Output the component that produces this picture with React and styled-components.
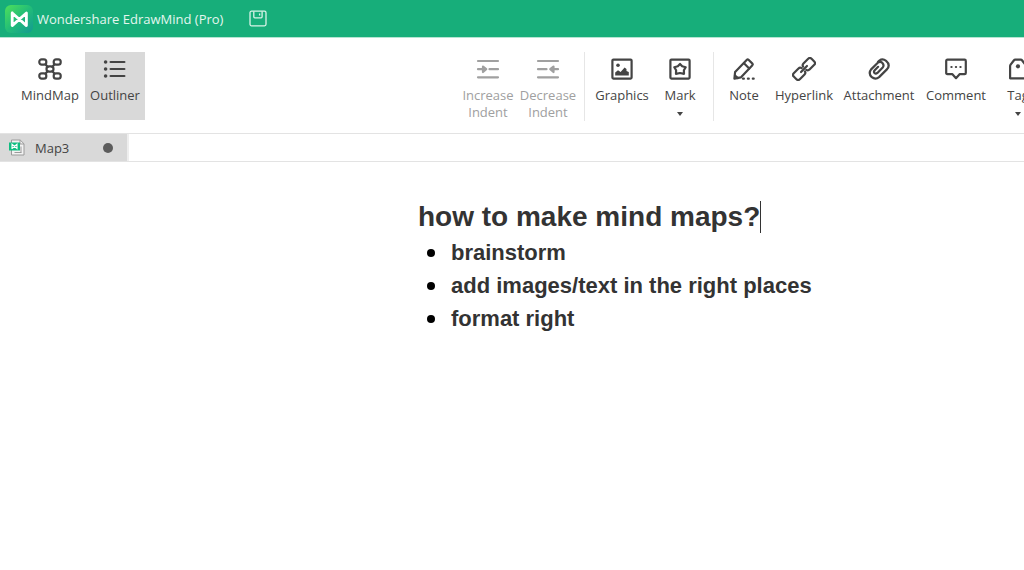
import { useState } from 'react'
import styled, { createGlobalStyle } from 'styled-components'

const tools = {
  view: [
    { id: 'mindmap', label: 'MindMap', icon: MindMapIcon, width: 60 },
    { id: 'outliner', label: 'Outliner', icon: OutlinerIcon, width: 60 },
  ],
  indent: [
    { id: 'increase', label: 'Increase Indent', icon: IncreaseIcon, width: 60, disabled: true },
    { id: 'decrease', label: 'Decrease Indent', icon: DecreaseIcon, width: 60, disabled: true },
  ],
  media: [
    { id: 'graphics', label: 'Graphics', icon: GraphicsIcon, width: 62 },
    { id: 'mark', label: 'Mark', icon: MarkIcon, width: 54, menu: true },
  ],
  insert: [
    { id: 'note', label: 'Note', icon: NoteIcon, width: 48 },
    { id: 'hyperlink', label: 'Hyperlink', icon: HyperlinkIcon, width: 72 },
    { id: 'attachment', label: 'Attachment', icon: AttachmentIcon, width: 78 },
    { id: 'comment', label: 'Comment', icon: CommentIcon, width: 76 },
    { id: 'tag', label: 'Tag', icon: TagIcon, width: 48, menu: true },
  ],
}

const topics = ['brainstorm', 'add images/text in the right places', 'format right']

function ToolButton({ tool, active, onClick }) {
  const Icon = tool.icon
  return (
    <Tool type='button' $width={tool.width} $active={active} disabled={tool.disabled} onClick={onClick}>
      <Icon />
      <Label>{tool.label}</Label>
      {tool.menu && <Arrow />}
    </Tool>
  )
}

function App() {
  const [view, setView] = useState('outliner')

  return (
    <>
      <GlobalStyle />
      <TitleBar>
        <Logo />
        <AppName>Wondershare EdrawMind (Pro)</AppName>
        <SaveButton type='button' aria-label='Save'>
          <SaveIcon />
        </SaveButton>
      </TitleBar>
      <Toolbar>
        <ViewGroup>
          {tools.view.map((tool) => (
            <ToolButton key={tool.id} tool={tool} active={view === tool.id} onClick={() => setView(tool.id)} />
          ))}
        </ViewGroup>
        <Group $divided>
          {tools.indent.map((tool) => (
            <ToolButton key={tool.id} tool={tool} />
          ))}
        </Group>
        <Group $divided>
          {tools.media.map((tool) => (
            <ToolButton key={tool.id} tool={tool} />
          ))}
        </Group>
        <Group>
          {tools.insert.map((tool) => (
            <ToolButton key={tool.id} tool={tool} />
          ))}
        </Group>
      </Toolbar>
      <Tabs>
        <Tab type='button'>
          <FileIcon />
          <TabName>Map3</TabName>
          <Unsaved />
        </Tab>
      </Tabs>
      <Outline>
        <Title>
          how to make mind maps?
          <Caret />
        </Title>
        <Topics>
          {topics.map((topic) => (
            <Topic key={topic}>{topic}</Topic>
          ))}
        </Topics>
      </Outline>
    </>
  )
}

export default App

/* icons */

function Logo() {
  return (
    <svg width='28' height='28' viewBox='0 0 28 28'>
      <defs>
        <linearGradient id='logo' x1='0' y1='0' x2='1' y2='1'>
          <stop offset='0' stopColor='#4fe05a' />
          <stop offset='0.5' stopColor='#22bd78' />
          <stop offset='1' stopColor='#129a92' />
        </linearGradient>
      </defs>
      <rect width='28' height='28' rx='6' fill='url(#logo)' />
      <path
        d='M7.2 8v12.6L21.4 8v12.6L7.2 8'
        fill='none'
        stroke='#fff'
        strokeWidth='2.8'
        strokeLinejoin='round'
        strokeLinecap='round'
      />
    </svg>
  )
}

function SaveIcon() {
  return (
    <svg width='18' height='18' viewBox='0 0 18 18' fill='none' stroke='#d9f3e8' strokeWidth='1.3'>
      <rect x='1' y='1.2' width='16' height='14.6' rx='1.5' />
      <path d='M4.8 1.5v5.3q0 1 1 1h6.3q1 0 1-1V1.5M10.6 3.4v2' />
    </svg>
  )
}

function MindMapIcon() {
  return (
    <Icon>
      <path d='M7.6 7.5l2 2.3M16.4 7.5l-2 2.3M7.6 16.5l2-2.3M16.4 16.5l-2-2.3' />
      <rect x='1.3' y='2.4' width='7' height='5.2' rx='2.4' />
      <rect x='15.7' y='2.4' width='7' height='5.2' rx='2.4' />
      <rect x='1.3' y='16.4' width='7' height='5.2' rx='2.4' />
      <rect x='15.7' y='16.4' width='7' height='5.2' rx='2.4' />
      <rect x='8.5' y='9.3' width='7' height='5.4' rx='2.6' />
    </Icon>
  )
}

function OutlinerIcon() {
  return (
    <Icon>
      <path d='M7.6 5h13.8M7.6 12h13.8M7.6 19h13.8' />
      <g fill='currentColor' stroke='none'>
        <circle cx='2.6' cy='5' r='1.8' />
        <circle cx='2.6' cy='12' r='1.8' />
        <circle cx='2.6' cy='19' r='1.8' />
      </g>
    </Icon>
  )
}

function IncreaseIcon() {
  return (
    <Icon>
      <path d='M2 4h20M2 20.3h20M2 12.2h6M13.5 12.2H22' />
      <path d='M7 9.5l3.2 2.7L7 15z' fill='currentColor' />
    </Icon>
  )
}

function DecreaseIcon() {
  return (
    <Icon>
      <path d='M2 4h20M2 20.3h20M2 12.2h8.5M16 12.2H22' />
      <path d='M17.5 9.5l-3.2 2.7 3.2 2.8z' fill='currentColor' />
    </Icon>
  )
}

function GraphicsIcon() {
  return (
    <Icon>
      <rect x='2.4' y='2.6' width='19.2' height='19' rx='1' />
      <circle cx='8' cy='8.2' r='1.8' fill='currentColor' stroke='none' />
      <path d='M5.2 18.6v-3.2l2.8-2.2 2.6 1.8 4-4.6 1.9 1.7v1.8l2.3 1.2v3.5z' fill='currentColor' stroke='none' />
    </Icon>
  )
}

function MarkIcon() {
  return (
    <Icon>
      <rect x='2.4' y='2.6' width='19.2' height='19' rx='1' />
      <path d='M12 6.9l2.2 2.4 3.5 1-1.8 3 .1 3.5-4-.8-4 .8.1-3.5-1.8-3 3.5-1z' />
    </Icon>
  )
}

function NoteIcon() {
  return (
    <Icon>
      <path d='M2.4 21.6l.7-6.6L14.9 2.8q.8-.8 1.6 0l3.9 3.8q.8.8 0 1.6L8.8 20.4z' />
      <path d='M12 6.3l5.2 5.2M3 18.5l3 2.6' />
      <path d='M11 21.7h.9M15.9 21.7h.9M20.8 21.7h.9' />
    </Icon>
  )
}

function HyperlinkIcon() {
  return (
    <Icon>
      <g transform='rotate(-45 12 12)'>
        <path d='M11 9.7q-.5-2-2.5-2H1.8q-2.4 0-2.4 2.4v3.8q0 2.4 2.4 2.4h6.7q2 0 2.5-2' />
        <path d='M13 14.3q.5 2 2.5 2h6.7q2.4 0 2.4-2.4v-3.8q0-2.4-2.4-2.4h-6.7q-2 0-2.5 2' />
        <path d='M7.8 12h8.4' />
      </g>
    </Icon>
  )
}

function AttachmentIcon() {
  return (
    <Icon>
      <path d='M11 4.8l1.4-1.2q3.2-2.4 6.7.3 4.6 4 1 8.2l-8 8q-3.6 3-7.3.1-3.8-3.9-.7-7.8l6.7-6.7q2.4-1.7 4.6.2 2.1 2.3.3 4.6l-5.3 5.4q-1.6 1.3-2.9.1-1.1-1.4.2-2.8l3.4-3.4' />
    </Icon>
  )
}

function CommentIcon() {
  return (
    <Icon>
      <path d='M3.4 2.7h17.2q1.2 0 1.2 1.2v12q0 1.2-1.2 1.2h-4.8L12 21.2l-3.8-4.1H3.4q-1.2 0-1.2-1.2v-12q0-1.2 1.2-1.2z' />
      <path d='M7.4 10h.2M11.9 10h.2M16.4 10h.2' />
    </Icon>
  )
}

function TagIcon() {
  return (
    <Icon>
      <path d='M4.1 21.3V9.2q0-.8.5-1.5l3.2-4.2q.6-.8 1.5-.8h5.4q.9 0 1.5.8l3.2 4.2q.5.7.5 1.5v12.1z' />
      <circle cx='12' cy='9.3' r='2.1' fill='currentColor' stroke='none' />
    </Icon>
  )
}

function FileIcon() {
  return (
    <svg width='18' height='18' viewBox='0 0 18 18' fill='none'>
      <path d='M3.5 1h8.7L16 4.8V16H3.5z' fill='#f2f2f2' stroke='#9b9b9b' />
      <path d='M12 1v4h4M6.5 13.5h7M13 7.5v6' stroke='#9b9b9b' />
      <rect x='1' y='3.5' width='11' height='8' fill='#10bd81' />
      <path d='M4 10V5.3l5 4.2V5M9 10V5.3L4 9.5' stroke='#fff' strokeWidth='1.1' />
    </svg>
  )
}

/* styles */

const GlobalStyle = createGlobalStyle`
  * {
    box-sizing: border-box;
  }
  body {
    margin: 0;
    background: #fff;
    color: #444;
    font-family: 'Open Sans', 'Noto Sans', sans-serif;
    font-size: 13px;
  }
  button {
    border: 0;
    background: none;
    color: inherit;
    font: inherit;
  }
  svg {
    flex-shrink: 0;
  }
`

const TitleBar = styled.header`
  display: flex;
  align-items: center;
  height: 38px;
  padding-left: 5px;
  background: #17ae7a;
  border-bottom: 1px solid #b5e4d2;
`

const AppName = styled.span`
  margin: 0 26px 0 4px;
  color: #e4f6ef;
  white-space: nowrap;
`

const SaveButton = styled.button`
  display: flex;
  padding: 0;
`

const Toolbar = styled.div`
  display: flex;
  height: 96px;
  padding: 14px 0 12px 20px;
  overflow: hidden;
  border-bottom: 1px solid #e3e3e3;
`

const ViewGroup = styled.div`
  display: flex;
  flex-shrink: 0;
  gap: 5px;
  margin-right: 307px;
`

const Group = styled.div`
  display: flex;
  flex-shrink: 0;
  padding: 0 6px;
  border-right: ${(props) => (props.$divided ? '1px solid #e6e6e6' : '0')};
`

const Tool = styled.button`
  display: flex;
  flex-direction: column;
  flex-shrink: 0;
  align-items: center;
  width: ${(props) => props.$width}px;
  height: 68px;
  padding: 5px 0 0;
  background: ${(props) => (props.$active ? '#d9d9d9' : 'transparent')};
  color: ${(props) => (props.disabled ? '#a0a0a0' : '#444')};
`

const Icon = styled.svg.attrs({ viewBox: '0 0 24 24' })`
  width: 24px;
  height: 24px;
  fill: none;
  stroke: currentColor;
  stroke-width: 2.2;
  stroke-linecap: round;
  stroke-linejoin: round;
`

const Label = styled.span`
  margin-top: 6px;
  line-height: 17px;
  text-align: center;
`

const Arrow = styled.span`
  margin-top: 8px;
  border: 3px solid transparent;
  border-top: 4px solid #444;
  border-bottom: 0;
`

const Tabs = styled.div`
  display: flex;
  height: 28px;
  border-bottom: 1px solid #e3e3e3;
`

const Tab = styled.button`
  display: flex;
  align-items: center;
  width: 129px;
  padding: 0 14px 0 8px;
  border-right: 2px solid #eee;
  background: #d9d9d9;
`

const TabName = styled.span`
  flex: 1;
  margin-left: 9px;
  text-align: left;
`

const Unsaved = styled.span`
  width: 10px;
  height: 10px;
  border-radius: 50%;
  background: #5c5c5c;
`

const Outline = styled.main`
  padding: 39px 0 0 418px;
  color: #333;
  font-family: 'Liberation Sans', Arial, sans-serif;
  font-weight: bold;
`

const Title = styled.h1`
  display: flex;
  margin: 0;
  font-size: 28px;
  line-height: 32px;
  white-space: nowrap;
`

const Caret = styled.span`
  width: 1px;
  height: 32px;
  background: #333;
`

const Topics = styled.ul`
  margin: 3px 0 0;
  padding-left: 9px;
  font-size: 22px;
  line-height: 33px;
  list-style: none;
`

const Topic = styled.li`
  display: flex;
  align-items: center;
  gap: 16px;

  &::before {
    content: '';
    width: 8px;
    height: 8px;
    border-radius: 50%;
    background: #000;
  }
`
